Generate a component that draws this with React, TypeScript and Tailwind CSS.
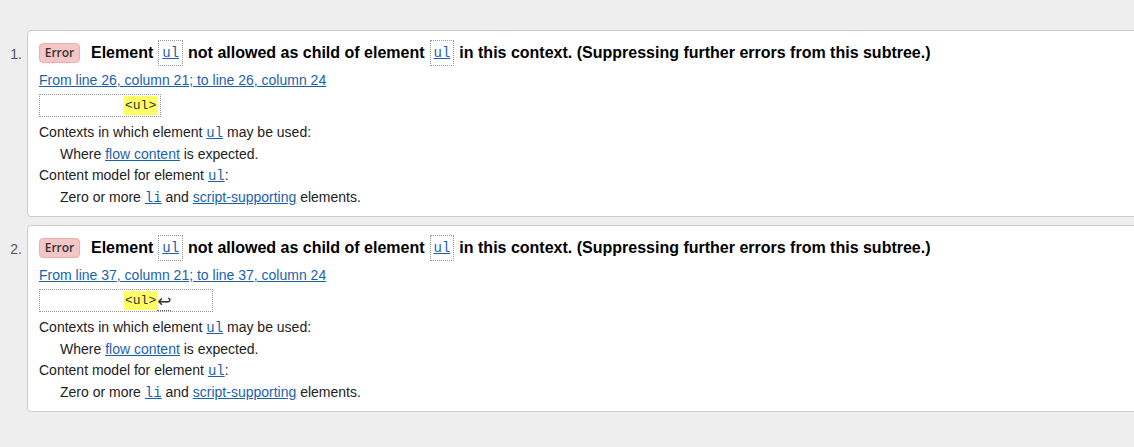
import React from 'react';

const sans = { fontFamily: '"Liberation Sans", Arial, sans-serif' };

const Code = ({ children }: { children: React.ReactNode }) => (
  <code className="text-[#1c5fac] underline text-[14px] font-normal" style={{ fontFamily: '"Liberation Mono", monospace' }}>
    {children}
  </code>
);

const Link = ({ children }: { children: React.ReactNode }) => (
  <span className="text-[#1c5fac] underline">{children}</span>
);

interface ErrorItem {
  index: number;
  line: number;
  newline?: boolean;
}

const items: ErrorItem[] = [
  { index: 1, line: 26 },
  { index: 2, line: 37, newline: true },
];

const ErrorCard = ({ item }: { item: ErrorItem }) => (
  <div className="flex">
    <div className="w-[27px] pr-[5px] pt-[14px] text-right text-[14px] text-[#555]">{item.index}.</div>
    <div className="flex-1 -mr-3 bg-white border border-[#cccccc] rounded-[4px] pl-[11px] pt-[9px] pb-[7px] text-[14px] text-[#222]">
      {/* Title */}
      <div className="flex items-center h-[26px]">
        <span className="inline-flex items-center justify-center w-[41px] h-[20px] rounded-[4px] bg-[#f6c6c6] border border-[#eab0b0] text-[12px] font-semibold text-[#333]" style={{ fontFamily: '"Open Sans", sans-serif' }}>
          Error
        </span>
        <p className="ml-[11px] text-[16px] font-bold text-black whitespace-nowrap flex items-center">
          Element
          <span className="mx-[5px] h-[26px] px-[3px] border border-dotted border-[#999] inline-flex items-center">
            <Code>ul</Code>
          </span>
          not allowed as child of element
          <span className="mx-[5px] h-[26px] px-[3px] border border-dotted border-[#999] inline-flex items-center">
            <Code>ul</Code>
          </span>
          in this context. (Suppressing further errors from this subtree.)
        </p>
      </div>

      {/* Location */}
      <p className="mt-[4px] leading-[20px]">
        <Link>
          From line {item.line}, column 21; to line {item.line}, column 24
        </Link>
      </p>

      {/* Extract */}
      <div
        className={`mt-[4px] h-[23px] border border-dotted border-[#999] flex items-center pl-[84px] text-[13px] ${item.newline ? 'w-[174px]' : 'w-[122px]'}`}
        style={{ fontFamily: '"Liberation Mono", monospace' }}
      >
        <span className="bg-[#ffff66] text-[#333] px-[1px]">&lt;ul&gt;</span>
        {item.newline && (
          <span
            className="text-[#333] border-b border-dotted border-[#666] text-[17px] leading-[17px] -mb-[2px]"
            style={{ fontFamily: '"DejaVu Sans", sans-serif' }}
          >
            ↩
          </span>
        )}
      </div>

      {/* Details */}
      <div className="mt-[5px] leading-[21px]">
        <p>Contexts in which element <Code>ul</Code> may be used:</p>
        <p className="pl-[21px]">
          Where <Link>flow content</Link> is expected.
        </p>
        <p>Content model for element <Code>ul</Code>:</p>
        <p className="pl-[21px]">
          Zero or more <Code>li</Code> and <Link>script-supporting</Link> elements.
        </p>
      </div>
    </div>
  </div>
);

export default function App() {
  return (
    <div className="w-[1134px] h-[447px] bg-[#eeeeee] overflow-hidden pt-[30px]" style={sans}>
      <div className="flex flex-col gap-[8px]">
        {items.map((item) => (
          <ErrorCard key={item.index} item={item} />
        ))}
      </div>
    </div>
  );
}
